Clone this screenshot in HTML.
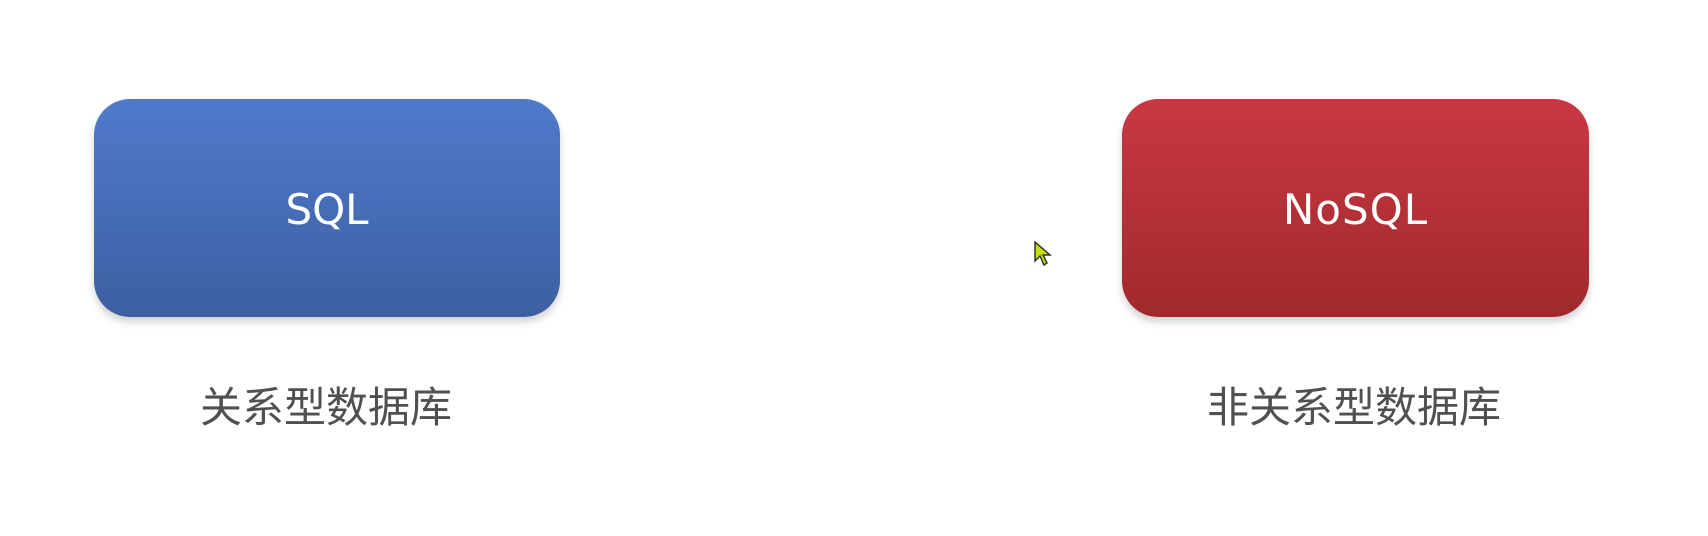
<!DOCTYPE html>
<html><head><meta charset="utf-8"><style>
html,body{margin:0;padding:0;background:#fff;width:1708px;height:536px;overflow:hidden;position:relative}
.box{position:absolute;top:99px;height:218px;border-radius:36px;box-shadow:0 5px 8px rgba(0,0,0,0.18);color:#fff;font-family:"DejaVu Sans","Liberation Sans",sans-serif;font-size:42px;display:flex;align-items:center;justify-content:center;}
.blue{left:94px;width:466px;background:linear-gradient(#4f7acb,#3d5fa2);}
.red{left:1122px;width:467px;background:linear-gradient(#c93841,#a0292d);}
.lbl{position:absolute;top:383px;font-family:"Liberation Sans","Noto Sans CJK SC",sans-serif;font-size:42px;color:#505050;line-height:50px;white-space:nowrap}
</style></head><body>
<div class="box blue"><span style="margin-top:3px">SQL</span></div>
<div class="box red"><span style="margin-top:3px;letter-spacing:1px">NoSQL</span></div>
<div class="lbl" style="left:200px">关系型数据库</div>
<div class="lbl" style="left:1207px">非关系型数据库</div>
<svg style="position:absolute;left:1034px;top:241px" width="20" height="28" viewBox="0 0 20 28"><path d="M1 1 L1 20 L6 15 L10 24 L13 22 L9 14 L16 14 Z" fill="#c8e000" stroke="#333" stroke-width="1.5"/></svg>
</body></html>
